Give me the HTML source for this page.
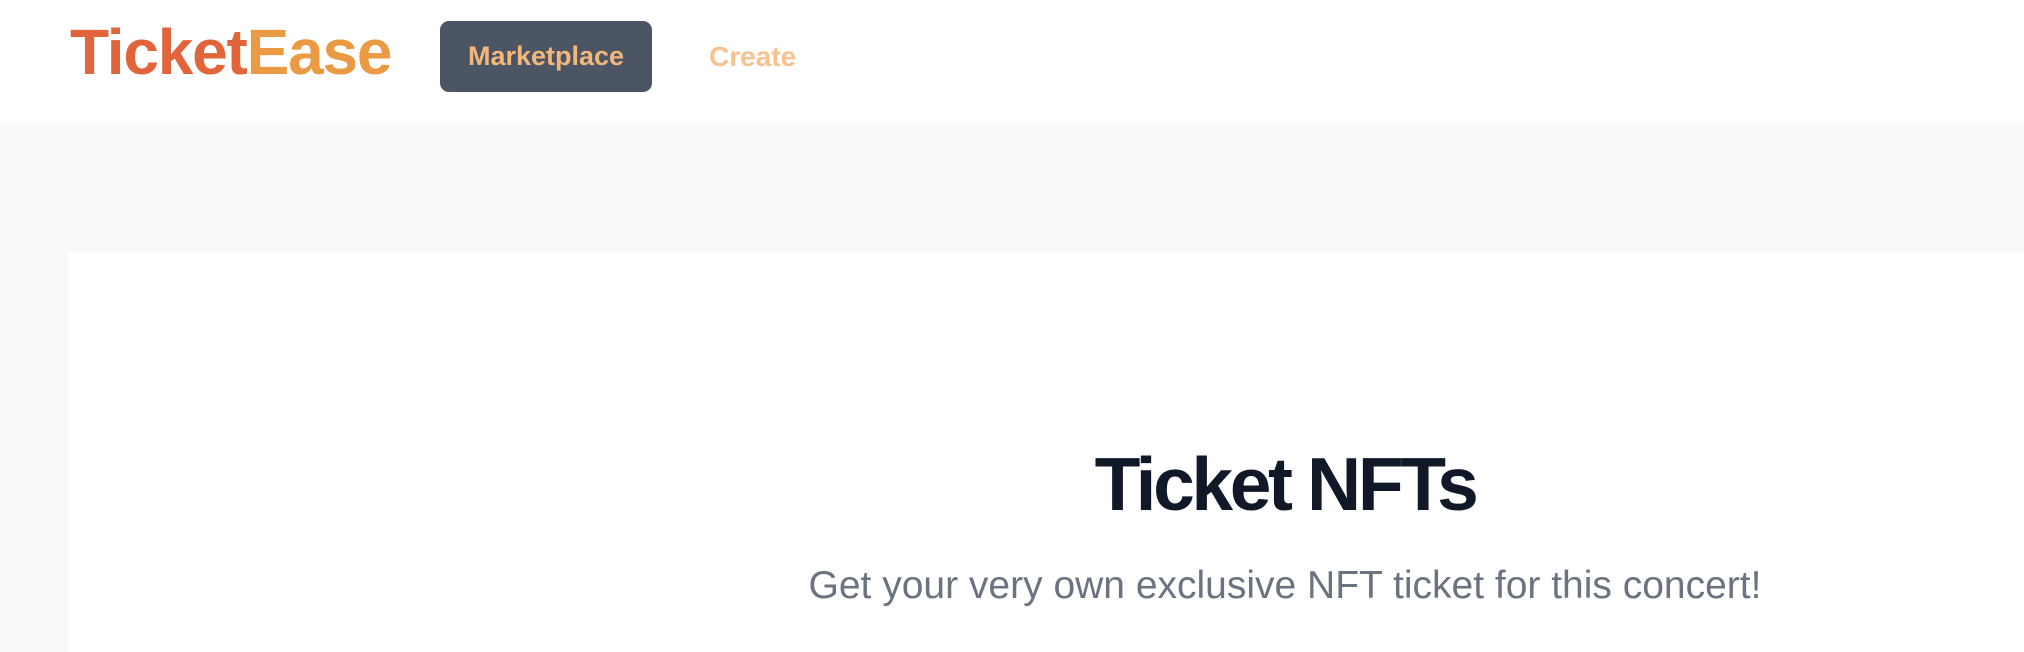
<!DOCTYPE html>
<html><head><meta charset="utf-8"><style>
html,body{margin:0;padding:0;width:2024px;height:648px;overflow:hidden;background:#f9fafb;font-family:"Liberation Sans",sans-serif}
.nav{position:absolute;left:0;top:0;width:2024px;height:123px;background:#fff}
.logo{position:absolute;left:70px;top:12px;font-size:64px;font-weight:bold;line-height:80px;letter-spacing:-1.2px}
.logo .a{color:#e1643a}.logo .b{color:#ea9a42}
.btn{position:absolute;left:440px;top:21px;width:212px;height:71px;background:#4b5563;border-radius:9px;color:#f3b77c;font-size:27px;font-weight:bold;line-height:71px;text-align:center}
.create{position:absolute;left:709px;top:21px;line-height:71px;font-size:28px;font-weight:bold;color:#f7c28e}
.card{position:absolute;left:68px;top:252px;width:1956px;height:400px;background:#fff}
h1{position:absolute;left:0;width:2570px;top:439px;margin:0;text-align:center;font-size:75px;font-weight:900;letter-spacing:-3.4px;color:#111827;line-height:90px}
p{position:absolute;left:0;width:2570px;top:560px;margin:0;text-align:center;font-size:39px;color:#6b7280;line-height:52px}
</style></head><body>
<div class="nav">
<div class="logo"><span class="a">Ticket</span><span class="b">Ease</span></div>
<div class="btn">Marketplace</div>
<div class="create">Create</div>
</div>
<div class="card"></div>
<h1>Ticket NFTs</h1>
<p>Get your very own exclusive NFT ticket for this concert!</p>
</body></html>
